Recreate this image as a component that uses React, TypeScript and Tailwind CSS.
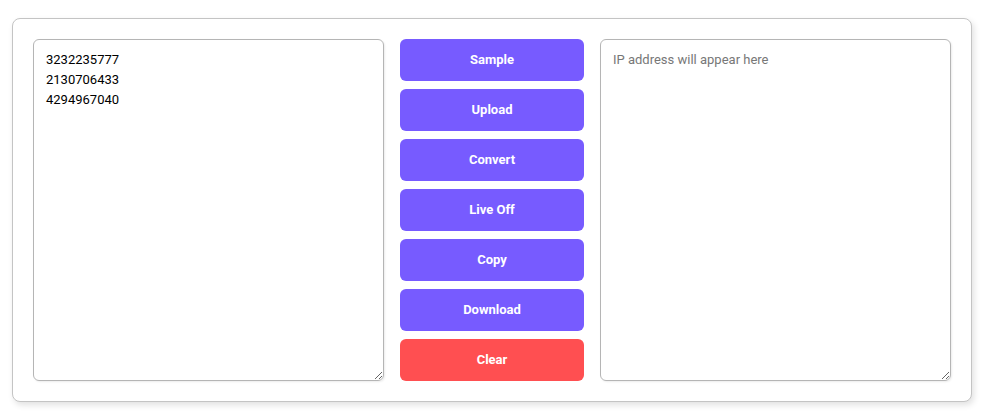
import React from 'react';

const buttons = ['Sample', 'Upload', 'Convert', 'Live Off', 'Copy', 'Download'];

export default function App() {
  const [input, setInput] = React.useState<string>('3232235777\n2130706433\n4294967040');
  const [output, setOutput] = React.useState<string>('');

  return (
    <div className="bg-white min-h-screen pt-[18px] pl-3" style={{ fontFamily: 'Roboto, "Liberation Sans", sans-serif' }}>
      <div className="w-[960px] rounded-lg border border-[#c4c4c4] bg-white p-5 shadow-[2px_3px_6px_rgba(0,0,0,0.12)]">
        <div className="grid grid-cols-[351px_184px_351px] gap-4 h-[342px]">
          <textarea
            value={input}
            onChange={(e) => setInput(e.target.value)}
            className="h-[342px] w-full rounded-md border border-[#b5b5b5] px-3 py-[10px] text-[13px] leading-5 text-black outline-0 shadow-[1px_1px_2px_rgba(0,0,0,0.08)]"
          />
          <div className="flex flex-col gap-2">
            {buttons.map((b) => (
              <button
                key={b}
                className="h-[42px] rounded-md bg-[#775bff] text-[13px] font-bold text-white"
              >
                {b}
              </button>
            ))}
            <button
              onClick={() => setInput('')}
              className="h-[42px] rounded-md bg-[#ff4f51] text-[13px] font-bold text-white"
            >
              Clear
            </button>
          </div>
          <textarea
            value={output}
            onChange={(e) => setOutput(e.target.value)}
            placeholder="IP address will appear here"
            className="h-[342px] w-full rounded-md border border-[#b5b5b5] px-3 py-[10px] text-[13px] leading-5 text-black placeholder:text-[#777] outline-0 shadow-[1px_1px_2px_rgba(0,0,0,0.08)]"
          />
        </div>
      </div>
    </div>
  );
}
